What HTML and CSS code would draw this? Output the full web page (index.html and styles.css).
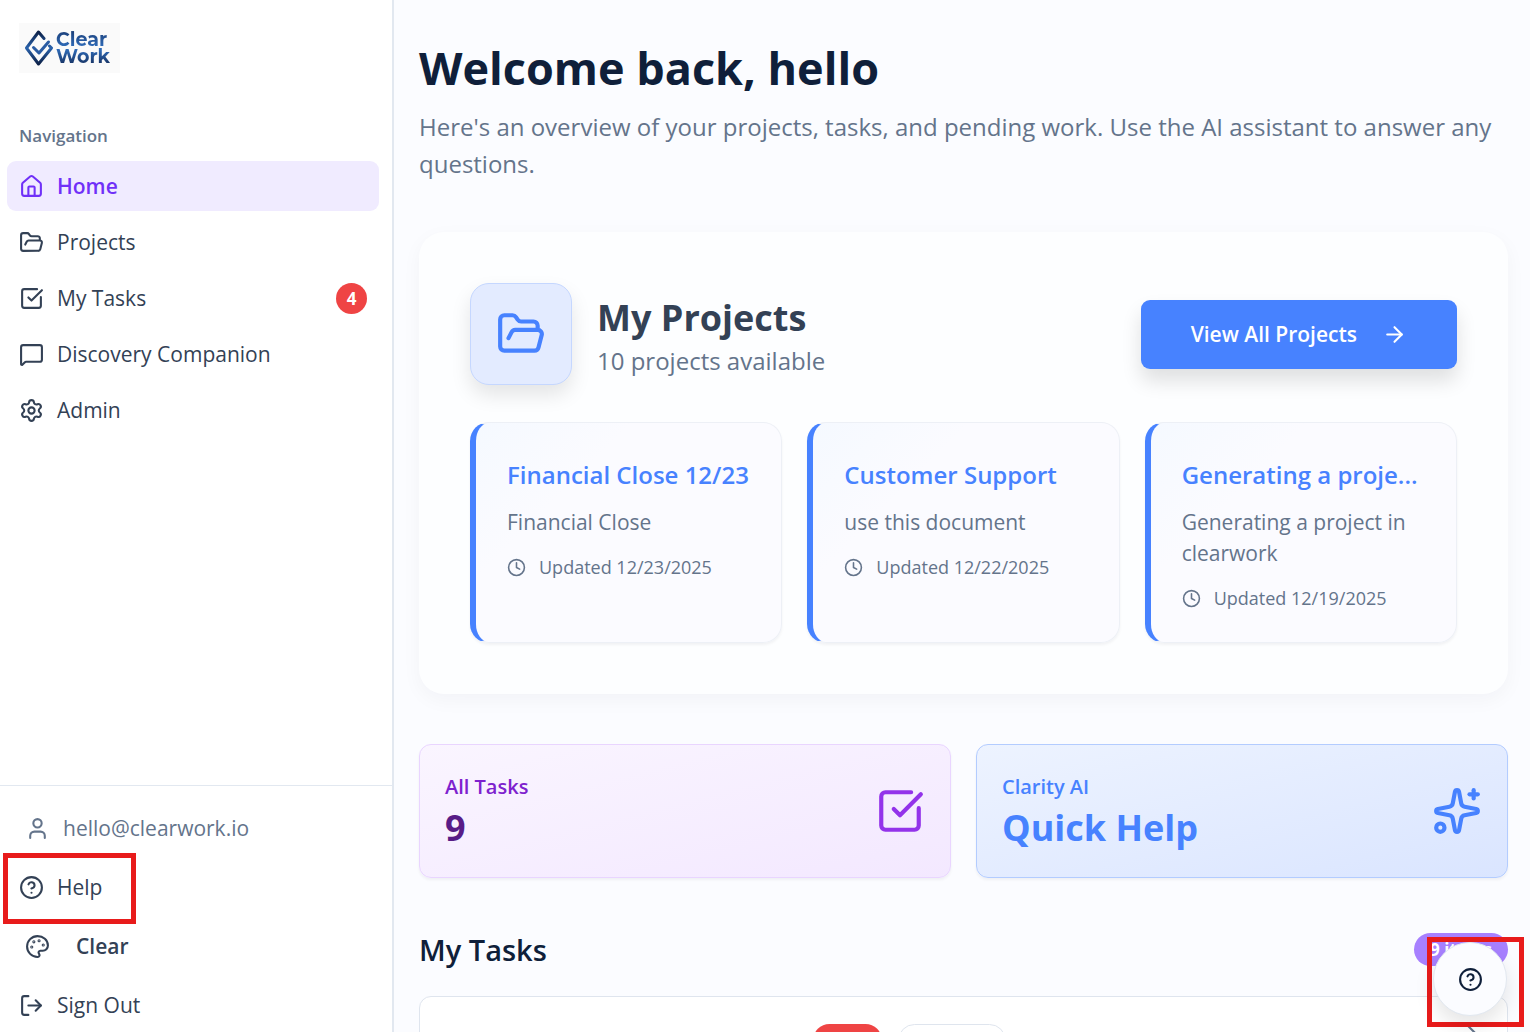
FILE: index.html
```html
<!DOCTYPE html>
<html lang="en">
  <head>
    <meta charset="UTF-8" />
    <meta name="viewport" content="width=device-width, initial-scale=1.0" />
    <title>ClearWork - Home</title>
    <link rel="stylesheet" href="styles.css">
  </head>
  <body>
    <!-- Icon sprite -->
    <svg class="sprite" aria-hidden="true">
      <symbol id="house" viewBox="0 0 24 24">
        <path d="M15 21v-8a1 1 0 0 0-1-1h-4a1 1 0 0 0-1 1v8" />
        <path d="M3 10a2 2 0 0 1 .709-1.528l7-5.999a2 2 0 0 1 2.582 0l7 5.999A2 2 0 0 1 21 10v9a2 2 0 0 1-2 2H5a2 2 0 0 1-2-2z" />
      </symbol>
      <symbol id="folder" viewBox="0 0 24 24">
        <path d="m6 14 1.5-2.9A2 2 0 0 1 9.24 10H20a2 2 0 0 1 1.94 2.5l-1.54 6a2 2 0 0 1-1.95 1.5H4a2 2 0 0 1-2-2V5a2 2 0 0 1 2-2h3.9a2 2 0 0 1 1.69.9l.81 1.2a2 2 0 0 0 1.67.9H18a2 2 0 0 1 2 2v2" />
      </symbol>
      <symbol id="check" viewBox="0 0 24 24">
        <path d="M21 10.656V19a2 2 0 0 1-2 2H5a2 2 0 0 1-2-2V5a2 2 0 0 1 2-2h12.344" />
        <path d="m9 11 3 3L22 4" />
      </symbol>
      <symbol id="message" viewBox="0 0 24 24">
        <path d="M22 17a2 2 0 0 1-2 2H6.828a2 2 0 0 0-1.414.586l-2.202 2.202A.71.71 0 0 1 2 21.286V5a2 2 0 0 1 2-2h16a2 2 0 0 1 2 2z" />
      </symbol>
      <symbol id="settings" viewBox="0 0 24 24">
        <path d="M9.671 4.136a2.34 2.34 0 0 1 4.659 0 2.34 2.34 0 0 0 3.319 1.915 2.34 2.34 0 0 1 2.33 4.033 2.34 2.34 0 0 0 0 3.831 2.34 2.34 0 0 1-2.33 4.033 2.34 2.34 0 0 0-3.319 1.915 2.34 2.34 0 0 1-4.659 0 2.34 2.34 0 0 0-3.32-1.915 2.34 2.34 0 0 1-2.33-4.033 2.34 2.34 0 0 0 0-3.831A2.34 2.34 0 0 1 6.35 6.051a2.34 2.34 0 0 0 3.319-1.915" />
        <circle cx="12" cy="12" r="3" />
      </symbol>
      <symbol id="user" viewBox="0 0 24 24">
        <path d="M19 21v-2a4 4 0 0 0-4-4H9a4 4 0 0 0-4 4v2" />
        <circle cx="12" cy="7" r="4" />
      </symbol>
      <symbol id="help" viewBox="0 0 24 24">
        <circle cx="12" cy="12" r="10" />
        <path d="M9.09 9a3 3 0 0 1 5.83 1c0 2-3 3-3 3" />
        <path d="M12 17h.01" />
      </symbol>
      <symbol id="palette" viewBox="0 0 24 24">
        <path d="M12 22a1 1 0 0 1 0-20 10 9 0 0 1 10 9 5 5 0 0 1-5 5h-2.25a1.75 1.75 0 0 0-1.4 2.8l.3.4a1.75 1.75 0 0 1-1.4 2.8z" />
        <circle cx="13.5" cy="6.5" r=".5" />
        <circle cx="17.5" cy="10.5" r=".5" />
        <circle cx="6.5" cy="12.5" r=".5" />
        <circle cx="8.5" cy="7.5" r=".5" />
      </symbol>
      <symbol id="logout" viewBox="0 0 24 24">
        <path d="m16 17 5-5-5-5" />
        <path d="M21 12H9" />
        <path d="M9 21H5a2 2 0 0 1-2-2V5a2 2 0 0 1 2-2h4" />
      </symbol>
      <symbol id="arrow" viewBox="0 0 24 24">
        <path d="M5 12h14" />
        <path d="m12 5 7 7-7 7" />
      </symbol>
      <symbol id="clock" viewBox="0 0 24 24">
        <circle cx="12" cy="12" r="10" />
        <path d="M12 6v6l4 2" />
      </symbol>
      <symbol id="sparkles" viewBox="0 0 24 24">
        <path d="M11.017 2.814a1 1 0 0 1 1.966 0l1.051 5.558a2 2 0 0 0 1.594 1.594l5.558 1.051a1 1 0 0 1 0 1.966l-5.558 1.051a2 2 0 0 0-1.594 1.594l-1.051 5.558a1 1 0 0 1-1.966 0l-1.051-5.558a2 2 0 0 0-1.594-1.594l-5.558-1.051a1 1 0 0 1 0-1.966l5.558-1.051a2 2 0 0 0 1.594-1.594z" />
        <path d="M20 2v4" />
        <path d="M22 4h-4" />
        <circle cx="4" cy="20" r="2" />
      </symbol>
      <symbol id="chevron" viewBox="0 0 24 24">
        <path d="m9 18 6-6-6-6" />
      </symbol>
    </svg>

    <div class="app">
      <aside class="sidebar">
        <a class="logo" href="#">
          <svg class="logo-mark" viewBox="0 0 28 36">
            <defs>
              <linearGradient id="logoFill" x1="0" y1="0" x2="0" y2="1">
                <stop offset="0" stop-color="#0d2148" />
                <stop offset="0.5" stop-color="#2a63ad" />
                <stop offset="1" stop-color="#0d2148" />
              </linearGradient>
            </defs>
            <path stroke="url(#logoFill)" d="M19 8.500 13.500 2 1.500 18 13.500 34 26.500 18 24.500 16" />
            <path stroke="#2a5ca3" d="m8.500 17.500 5.500 5.500L23.500 12" />
          </svg>
          <span class="logo-text">Clear<br />Work</span>
        </a>

        <nav class="nav">
          <h2 class="nav-title">Navigation</h2>
          <a class="nav-item active" href="#"><svg class="icon"><use href="#house" /></svg>Home</a>
          <a class="nav-item" href="#"><svg class="icon"><use href="#folder" /></svg>Projects</a>
          <a class="nav-item" href="#"><svg class="icon"><use href="#check" /></svg>My Tasks<span class="count">4</span></a>
          <a class="nav-item" href="#"><svg class="icon"><use href="#message" /></svg>Discovery Companion</a>
          <a class="nav-item" href="#"><svg class="icon"><use href="#settings" /></svg>Admin</a>
        </nav>

        <div class="sidebar-footer">
          <div class="nav-item account"><svg class="icon"><use href="#user" /></svg>hello@clearwork.io</div>
          <a class="nav-item help-link" href="#"><svg class="icon"><use href="#help" /></svg>Help<span class="highlight"></span></a>
          <button class="nav-item theme" type="button"><svg class="icon"><use href="#palette" /></svg>Clear</button>
          <button class="nav-item" type="button"><svg class="icon"><use href="#logout" /></svg>Sign Out</button>
        </div>
      </aside>

      <main class="main">
        <header class="welcome">
          <h1>Welcome back, hello</h1>
          <p>Here's an overview of your projects, tasks, and pending work. Use the AI assistant to answer any questions.</p>
        </header>

        <section class="projects">
          <div class="projects-header">
            <div class="projects-icon"><svg class="icon-lg"><use href="#folder" /></svg></div>
            <div class="projects-heading">
              <h2>My Projects</h2>
              <p>10 projects available</p>
            </div>
            <button class="view-all" type="button">View All Projects<svg class="icon"><use href="#arrow" /></svg></button>
          </div>

          <div class="project-grid">
            <article class="project">
              <h3>Financial Close 12/23</h3>
              <p>Financial Close</p>
              <div class="updated"><svg class="icon-sm"><use href="#clock" /></svg>Updated 12/23/2025</div>
            </article>
            <article class="project">
              <h3>Customer Support</h3>
              <p>use this document</p>
              <div class="updated"><svg class="icon-sm"><use href="#clock" /></svg>Updated 12/22/2025</div>
            </article>
            <article class="project">
              <h3>Generating a proje...</h3>
              <p>Generating a project in clearwork</p>
              <div class="updated"><svg class="icon-sm"><use href="#clock" /></svg>Updated 12/19/2025</div>
            </article>
          </div>
        </section>

        <section class="stats">
          <a class="stat stat-tasks" href="#">
            <span class="stat-text"><span class="stat-label">All Tasks</span><span class="stat-value">9</span></span>
            <svg class="icon-lg"><use href="#check" /></svg>
          </a>
          <a class="stat stat-ai" href="#">
            <span class="stat-text"><span class="stat-label">Clarity AI</span><span class="stat-value">Quick Help</span></span>
            <svg class="icon-lg"><use href="#sparkles" /></svg>
          </a>
        </section>

        <section class="tasks">
          <div class="tasks-header">
            <h2>My Tasks</h2>
            <span class="items">9 items</span>
          </div>
          <div class="task">
            <span class="tag tag-red"></span>
            <span class="tag tag-outline"></span>
            <svg class="icon chevron"><use href="#chevron" /></svg>
          </div>
        </section>
      </main>

      <div class="fab-wrap">
        <button class="fab" type="button" aria-label="Help"><svg class="icon"><use href="#help" /></svg></button>
      </div>
    </div>
  </body>
</html>
```

FILE: styles.css
```css
* {
  box-sizing: border-box;
}

body {
  font-family: 'Segoe UI', 'Open Sans', 'Noto Sans', sans-serif;
  font-size: 21px;
  margin: 0;
  background-color: #fbfcff;
  color: #334155;
}

h1,
h2,
h3,
p {
  margin: 0;
}

a {
  color: inherit;
  text-decoration: none;
}

button {
  font: inherit;
  color: inherit;
  border: none;
  background: none;
  cursor: pointer;
}

svg {
  flex-shrink: 0;
  fill: none;
  stroke: currentColor;
  stroke-width: 2;
  stroke-linecap: round;
  stroke-linejoin: round;
}

.sprite {
  display: none;
}

.icon {
  width: 25px;
  height: 25px;
}

.icon-sm {
  width: 19px;
  height: 19px;
}

.icon-lg {
  width: 50px;
  height: 50px;
}

.app {
  position: relative;
  display: flex;
  height: 100vh;
  overflow: hidden;
}

/* Sidebar */
.sidebar {
  display: flex;
  flex-direction: column;
  flex: 0 0 394px;
  background-color: #fff;
  border-right: 2px solid #e2e8f0;
}

.logo {
  display: flex;
  align-items: center;
  align-self: flex-start;
  gap: 3px;
  margin: 23px 19px 0;
  padding: 7px 10px 7px 6px;
  background-color: #fafafa;
}

.logo-mark {
  width: 28px;
  height: 36px;
  stroke-width: 3;
}

.logo-text {
  font-family: 'Montserrat', 'Inter', sans-serif;
  font-size: 19px;
  font-weight: 700;
  line-height: 17px;
  color: #24508f;
  background: linear-gradient(#1c3f78, #2f6bb8 45%, #2f6bb8 55%, #16305f);
  background-clip: text;
  -webkit-text-fill-color: transparent;
}

.nav {
  display: flex;
  flex-direction: column;
  flex: 1;
  gap: 6px;
  padding: 50px 13px 0 7px;
}

.nav-title {
  padding: 0 12px;
  margin-bottom: 6px;
  font-size: 17px;
  font-weight: 600;
  line-height: 26px;
  color: #64748b;
}

.nav-item {
  display: flex;
  align-items: center;
  gap: 13px;
  height: 50px;
  padding: 0 12px;
  border-radius: 9px;
}

.nav-item.active {
  background-color: #f0ebff;
  color: #7030f8;
  font-weight: 600;
}

.count {
  width: 31px;
  height: 31px;
  margin-left: auto;
  border-radius: 50%;
  background-color: #ef4444;
  color: #fff;
  font-size: 17px;
  font-weight: 700;
  line-height: 31px;
  text-align: center;
}

.sidebar-footer {
  display: flex;
  flex-direction: column;
  gap: 9px;
  padding: 17px 12px 2px 7px;
  border-top: 1px solid #e2e8f0;
}

.account {
  padding-left: 18px;
  color: #64748b;
}

.theme {
  gap: 26px;
  padding-left: 18px;
  font-weight: 600;
}

.help-link {
  position: relative;
}

.highlight {
  position: absolute;
  top: -9px;
  left: -4px;
  width: 133px;
  height: 71px;
  border: 5px solid #e81b1b;
}

/* Main column */
.main {
  flex: 1;
  min-width: 0;
  padding: 38px 22px 0 25px;
}

.welcome {
  margin-bottom: 50px;
}

.welcome h1 {
  margin-bottom: 10px;
  font-size: 45px;
  font-weight: 700;
  line-height: 60px;
  color: #0f1f3a;
}

.welcome p {
  font-size: 24px;
  line-height: 37px;
  color: #64748b;
}

.projects {
  padding: 51px;
  border-radius: 25px;
  background-color: #fdfeff;
  box-shadow: 0 6px 20px rgba(15, 23, 42, 0.04);
}

.projects-header {
  display: flex;
  align-items: center;
  gap: 25px;
  margin-bottom: 37px;
}

.projects-icon {
  display: flex;
  align-items: center;
  justify-content: center;
  width: 102px;
  height: 102px;
  border: 1px solid #c5d7ff;
  border-radius: 19px;
  background-color: #e3ebff;
  color: #4782ff;
  box-shadow: 0 10px 20px rgba(0, 0, 0, 0.1);
}

.projects-heading {
  flex: 1;
  padding-top: 5px;
}

.projects-heading h2 {
  font-size: 36px;
  font-weight: 700;
  line-height: 48px;
}

.projects-heading p {
  font-size: 24px;
  line-height: 38px;
  color: #64748b;
}

.view-all {
  display: flex;
  align-items: center;
  gap: 25px;
  height: 69px;
  padding: 0 50px;
  border-radius: 9px;
  background-color: #4782ff;
  color: #fff;
  font-weight: 600;
  box-shadow: 0 12px 20px rgba(0, 0, 0, 0.12);
}

.project-grid {
  display: grid;
  grid-template-columns: repeat(3, 1fr);
  gap: 25px;
}

.project {
  min-width: 0;
  padding: 31px;
  border: 1px solid #edf0f6;
  border-left: 6px solid #4782ff;
  border-radius: 19px;
  background: linear-gradient(135deg, #f5f9ff, #fbfbff 30%);
  box-shadow: 0 2px 3px rgba(15, 23, 42, 0.05);
}

.project h3 {
  margin-bottom: 11px;
  overflow: hidden;
  font-size: 24px;
  font-weight: 600;
  line-height: 42px;
  white-space: nowrap;
  color: #4782ff;
}

.project p {
  line-height: 31px;
  color: #64748b;
}

.updated {
  display: flex;
  align-items: center;
  gap: 13px;
  margin-top: 17px;
  font-size: 18px;
  line-height: 25px;
  color: #64748b;
}

.stats {
  display: grid;
  grid-template-columns: 1fr 1fr;
  gap: 25px;
  margin: 50px 0 48px;
}

.stat {
  display: flex;
  align-items: center;
  justify-content: space-between;
  padding: 25px;
  border: 1px solid #e9d5ff;
  border-radius: 12px;
  box-shadow: 0 2px 3px rgba(15, 23, 42, 0.05);
}

.stat-text {
  display: flex;
  flex-direction: column;
}

.stat-label {
  font-size: 20px;
  font-weight: 600;
  line-height: 34px;
}

.stat-value {
  font-size: 36px;
  font-weight: 700;
  line-height: 48px;
}

.stat-tasks {
  background: linear-gradient(to bottom right, #faf5ff, #f3e8ff);
  color: #9333ea;
}

.stat-tasks .stat-label {
  color: #7e22ce;
}

.stat-tasks .stat-value {
  color: #581c87;
}

.stat-ai {
  border-color: #b3ccff;
  background: linear-gradient(to bottom right, #edf3ff, #dae5ff);
  color: #4782ff;
}

.tasks-header {
  display: flex;
  align-items: center;
  justify-content: space-between;
  height: 46px;
  margin-bottom: 24px;
}

.tasks-header h2 {
  font-size: 29px;
  font-weight: 600;
  color: #0f1f3a;
}

.items {
  padding: 0 16px;
  border-radius: 17px;
  background-color: #a780ff;
  color: #fff;
  font-size: 17px;
  font-weight: 700;
  line-height: 33px;
}

.task {
  display: flex;
  justify-content: flex-end;
  gap: 16px;
  padding: 23px;
  border: 1px solid #dfe5ee;
  border-radius: 12px;
  background-color: #fff;
}

.tag {
  height: 33px;
  margin-top: 4px;
  border-radius: 17px;
}

.tag-red {
  width: 69px;
  background-color: #ef4444;
}

.tag-outline {
  width: 108px;
  border: 1px solid #dfe5ee;
}

.chevron {
  margin-left: 42%;
  color: #64748b;
}

/* Floating help button */
.fab-wrap {
  position: absolute;
  right: 6px;
  bottom: 5px;
  padding: 0 12px 6px 1px;
  border: 5px solid #e81b1b;
}

.fab {
  display: flex;
  align-items: center;
  justify-content: center;
  width: 74px;
  height: 74px;
  padding: 0;
  border: 1px solid #e2e8f0;
  border-radius: 50%;
  background-color: #fbfcff;
  color: #0f1f3a;
  box-shadow: 0 10px 20px rgba(0, 0, 0, 0.1);
}
```
